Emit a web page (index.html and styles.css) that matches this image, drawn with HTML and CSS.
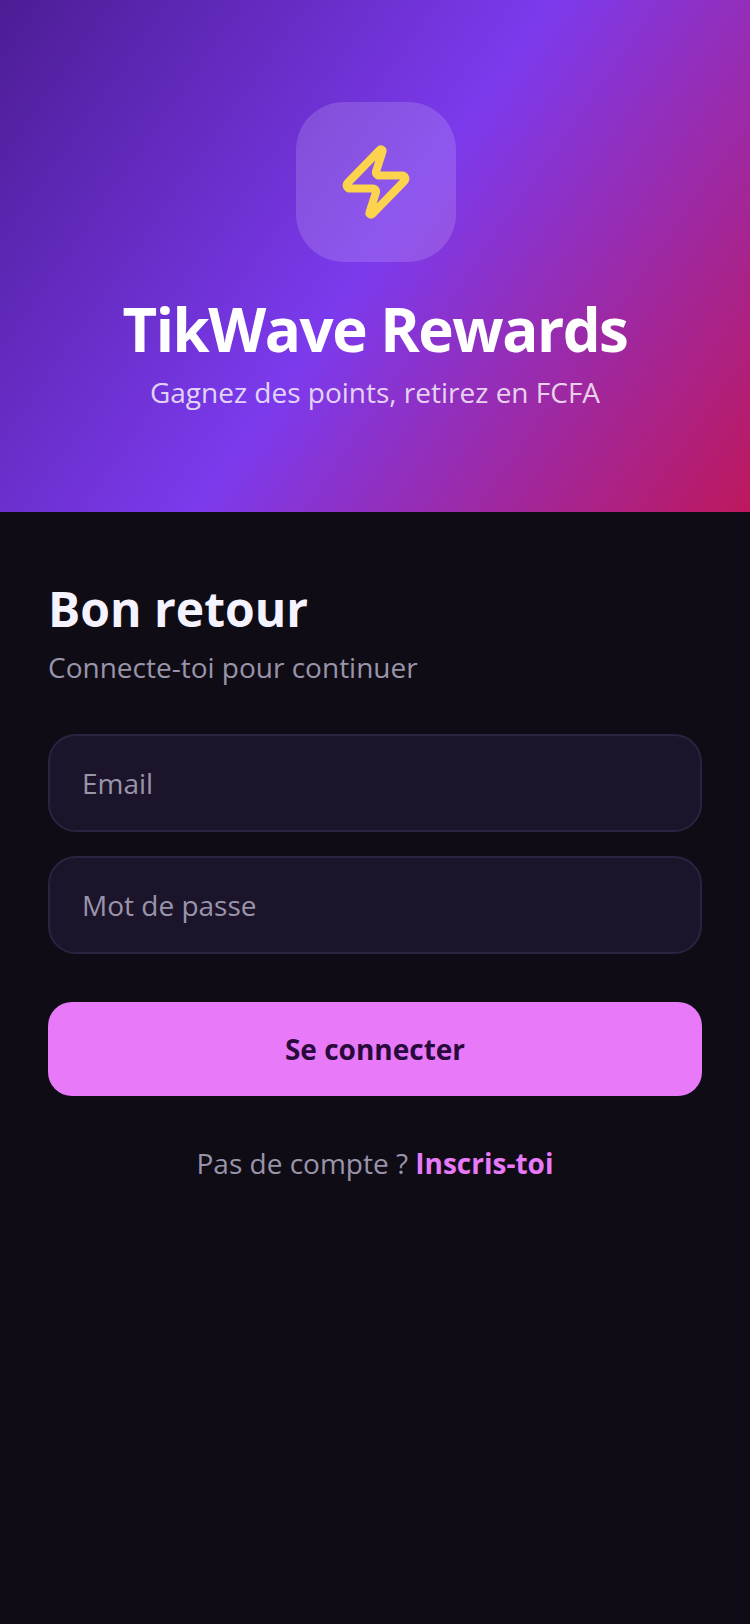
FILE: index.html
```html
<!DOCTYPE html>
<html lang="fr">
<head>
<meta charset="utf-8">
<title>TikWave Rewards</title>
<link rel="stylesheet" href="styles.css">
</head>
<body>
<div class="screen">
  <header class="hero">
    <div class="logo">
      <svg class="bolt" viewBox="0 0 24 24" fill="none" stroke="#fcd34d" stroke-width="2.5" stroke-linecap="round" stroke-linejoin="round"><path d="M4 14a1 1 0 0 1-.78-1.63l9.9-10.2a.5.5 0 0 1 .86.46l-1.92 6.02A1 1 0 0 0 13 10h7a1 1 0 0 1 .78 1.63l-9.9 10.2a.5.5 0 0 1-.86-.46l1.92-6.02A1 1 0 0 0 11 14z"/></svg>
    </div>
    <h1 class="brand">TikWave Rewards</h1>
    <p class="tagline">Gagnez des points, retirez en FCFA</p>
  </header>
  <main class="form">
    <h2 class="heading">Bon retour</h2>
    <p class="sub">Connecte-toi pour continuer</p>
    <input class="field field-first" type="email" placeholder="Email">
    <input class="field" type="password" placeholder="Mot de passe">
    <button class="submit" type="button">Se connecter</button>
    <p class="signup">Pas de compte ? <a class="signup-link" href="#">Inscris-toi</a></p>
  </main>
</div>
</body>
</html>
```
FILE: styles.css
```css
* { box-sizing: border-box; }
html, body { margin: 0; padding: 0; }
body { background: #0f0c16; font-family: "Open Sans", sans-serif; }
.screen { width: 750px; min-height: 1624px; display: flex; flex-direction: column; }
.hero {
  height: 512px;
  background: linear-gradient(125deg, #4c1d95 0%, #7c3aed 50%, #be185d 100%);
  display: flex; flex-direction: column; align-items: center;
  padding-top: 102px;
}
.logo {
  width: 160px; height: 160px; border-radius: 48px; margin-left: 2px;
  background: rgba(255,255,255,0.15);
  display: flex; align-items: center; justify-content: center;
}
.bolt { width: 78px; height: 78px; display: block; }
.brand { margin: 28px 0 0; font-size: 60px; line-height: 78px; font-weight: 700; color: #fff; letter-spacing: -1.5px; }
.tagline { margin: 4px 0 0; font-size: 28px; line-height: 40px; color: rgba(255,255,255,0.8); }
.form { padding: 64px 48px 0; display: flex; flex-direction: column; }
.heading { margin: 0; font-size: 48px; line-height: 66px; font-weight: 700; color: #f5f3ff; }
.sub { margin: 6px 0 0; font-size: 28px; line-height: 38px; color: #9a94aa; }
.field {
  display: block; width: 654px; height: 98px; margin-top: 24px;
  padding: 0 32px; border: 2px solid #2a2440; border-radius: 28px;
  background: #1c142a; color: #fff; outline: none;
  font-family: inherit; font-size: 28px;
}
.field::placeholder { color: #9a94aa; opacity: 1; }
.field-first { margin-top: 48px; }
.submit {
  display: block; width: 654px; height: 94px; margin-top: 48px;
  border: 0; border-radius: 24px; background: #e879f9; color: #2a0a3d;
  font-family: inherit; font-size: 28px; font-weight: 700;
}
.signup { margin: 47px 0 0; text-align: center; font-size: 28px; line-height: 40px; color: #9a94aa; }
.signup-link { color: #e879f9; font-weight: 700; text-decoration: none; }
```
